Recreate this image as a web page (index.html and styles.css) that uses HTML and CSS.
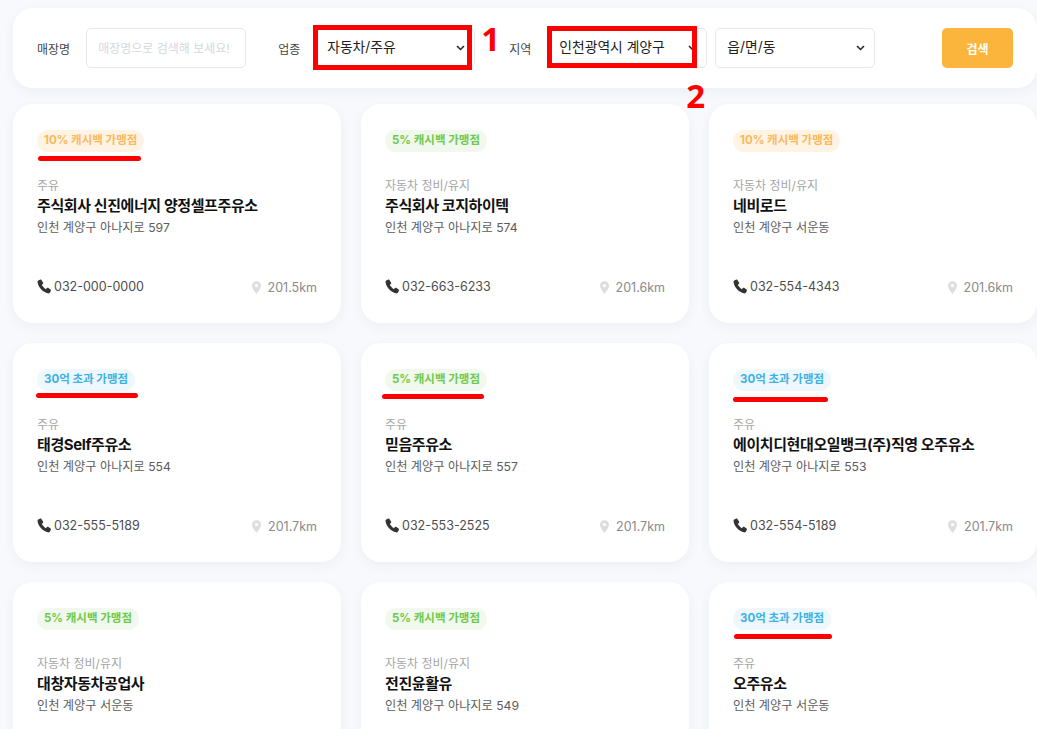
FILE: index.html
```html
<!DOCTYPE html>
<html lang="ko">
<head>
  <meta charset="UTF-8">
  <meta name="viewport" content="width=device-width, initial-scale=1.0">
  <title>가맹점 검색</title>
  <link rel="stylesheet" href="styles.css">
</head>
<body>
  <svg class="iconDefs" width="0" height="0">
    <symbol id="phone" viewBox="0 0 16 16">
      <path d="M3.600.6 1.400 1.500C.7 1.900.5 2.600.6 3.400c.4 2.800 1.800 5.400 3.800 7.600 2 2.100 4.500 3.700 7.300 4.300.8.2 1.600 0 2-.7l1.100-2.200c.2-.4.1-.9-.3-1.200l-2.700-1.800c-.4-.3-.9-.2-1.200.1L9.500 10.900C8.100 10.200 5.800 7.800 5.100 6.400l1.300-1.300c.3-.3.4-.8.2-1.200L4.700 1C4.400.6 4 .4 3.600.6z"/>
    </symbol>
    <symbol id="pin" viewBox="0 0 10 14">
      <path fill-rule="evenodd" d="M5 0C2.200 0 0 2.200 0 5c0 3.500 5 9 5 9s5-5.500 5-9c0-2.800-2.200-5-5-5zm0 6.800A1.900 1.900 0 1 1 5 3a1.900 1.900 0 0 1 0 3.800z"/>
    </symbol>
  </svg>

  <div class="searchBar">
    <label class="fieldLabel nameLabel">매장명</label>
    <input type="text" class="nameInput" placeholder="매장명으로 검색해 보세요!">
    <label class="fieldLabel typeLabel">업종</label>
    <div class="marked">
      <select class="typeSelect"><option>자동차/주유</option></select>
      <span class="redBox typeBox"></span>
      <span class="redNum numOne">1</span>
    </div>
    <label class="fieldLabel areaLabel">지역</label>
    <div class="marked">
      <select class="areaSelect"><option>인천광역시 계양구</option></select>
      <span class="redBox areaBox"></span>
      <span class="redNum numTwo">2</span>
    </div>
    <select class="townSelect"><option>읍/면/동</option></select>
    <button class="searchButton">검색</button>
  </div>

  <div class="cardGrid">
    <div class="card">
      <div class="badgeRow"><span class="badge orange">10% 캐시백 가맹점<i class="redLine lineA"></i></span></div>
      <div class="category">주유</div>
      <div class="shopName">주식회사 신진에너지 양정셀프주유소</div>
      <div class="address">인천 계양구 아나지로 597</div>
      <div class="cardFoot">
        <span class="tel"><svg class="phoneIcon"><use href="#phone"/></svg>032-000-0000</span>
        <span class="dist"><svg class="pinIcon"><use href="#pin"/></svg>201.5km</span>
      </div>
    </div>
    <div class="card">
      <div class="badgeRow"><span class="badge green">5% 캐시백 가맹점</span></div>
      <div class="category">자동차 정비/유지</div>
      <div class="shopName">주식회사 코지하이텍</div>
      <div class="address">인천 계양구 아나지로 574</div>
      <div class="cardFoot">
        <span class="tel"><svg class="phoneIcon"><use href="#phone"/></svg>032-663-6233</span>
        <span class="dist"><svg class="pinIcon"><use href="#pin"/></svg>201.6km</span>
      </div>
    </div>
    <div class="card">
      <div class="badgeRow"><span class="badge orange">10% 캐시백 가맹점</span></div>
      <div class="category">자동차 정비/유지</div>
      <div class="shopName">네비로드</div>
      <div class="address">인천 계양구 서운동</div>
      <div class="cardFoot">
        <span class="tel"><svg class="phoneIcon"><use href="#phone"/></svg>032-554-4343</span>
        <span class="dist"><svg class="pinIcon"><use href="#pin"/></svg>201.6km</span>
      </div>
    </div>
    <div class="card">
      <div class="badgeRow"><span class="badge blue">30억 초과 가맹점<i class="redLine lineB"></i></span></div>
      <div class="category">주유</div>
      <div class="shopName">태경Self주유소</div>
      <div class="address">인천 계양구 아나지로 554</div>
      <div class="cardFoot">
        <span class="tel"><svg class="phoneIcon"><use href="#phone"/></svg>032-555-5189</span>
        <span class="dist"><svg class="pinIcon"><use href="#pin"/></svg>201.7km</span>
      </div>
    </div>
    <div class="card">
      <div class="badgeRow"><span class="badge green">5% 캐시백 가맹점<i class="redLine lineC"></i></span></div>
      <div class="category">주유</div>
      <div class="shopName">믿음주유소</div>
      <div class="address">인천 계양구 아나지로 557</div>
      <div class="cardFoot">
        <span class="tel"><svg class="phoneIcon"><use href="#phone"/></svg>032-553-2525</span>
        <span class="dist"><svg class="pinIcon"><use href="#pin"/></svg>201.7km</span>
      </div>
    </div>
    <div class="card">
      <div class="badgeRow"><span class="badge blue">30억 초과 가맹점<i class="redLine lineD"></i></span></div>
      <div class="category">주유</div>
      <div class="shopName">에이치디현대오일뱅크(주)직영 오주유소</div>
      <div class="address">인천 계양구 아나지로 553</div>
      <div class="cardFoot">
        <span class="tel"><svg class="phoneIcon"><use href="#phone"/></svg>032-554-5189</span>
        <span class="dist"><svg class="pinIcon"><use href="#pin"/></svg>201.7km</span>
      </div>
    </div>
    <div class="card">
      <div class="badgeRow"><span class="badge green">5% 캐시백 가맹점</span></div>
      <div class="category">자동차 정비/유지</div>
      <div class="shopName">대창자동차공업사</div>
      <div class="address">인천 계양구 서운동</div>
    </div>
    <div class="card">
      <div class="badgeRow"><span class="badge green">5% 캐시백 가맹점</span></div>
      <div class="category">자동차 정비/유지</div>
      <div class="shopName">전진윤활유</div>
      <div class="address">인천 계양구 아나지로 549</div>
    </div>
    <div class="card">
      <div class="badgeRow"><span class="badge blue">30억 초과 가맹점<i class="redLine lineE"></i></span></div>
      <div class="category">주유</div>
      <div class="shopName">오주유소</div>
      <div class="address">인천 계양구 서운동</div>
    </div>
  </div>
</body>
</html>
```

FILE: styles.css
```css
html, body {
  margin: 0;
  height: 729px;
  overflow: hidden;
}

body {
  padding: 8px 0 0 13px;
  box-sizing: border-box;
  background: #f7f9fc;
  font-family: Inter, "Noto Sans CJK KR", sans-serif;
  color: #222;
}

.iconDefs {
  position: absolute;
}

/* search bar */
.searchBar {
  display: flex;
  align-items: center;
  width: 1024px;
  height: 80px;
  box-sizing: border-box;
  padding: 0 24px;
  background: #fff;
  border-radius: 20px;
  box-shadow: 0 4px 12px rgba(40, 60, 110, 0.05);
}

.fieldLabel {
  font-size: 12px;
  color: #444;
  white-space: nowrap;
}

.nameInput, .searchBar select {
  height: 40px;
  box-sizing: border-box;
  border: 1px solid #e5e7eb;
  border-radius: 5px;
  background-color: #fff;
  font-family: inherit;
  font-size: 13.8px;
  color: #222;
}

.searchBar select {
  appearance: none;
  padding: 0 11px 2px;
  background-image: url("data:image/svg+xml,%3Csvg xmlns='http://www.w3.org/2000/svg' width='9' height='6'%3E%3Cpath d='M1 1l3.500 3.500L8 1' fill='none' stroke='%23222' stroke-width='1.500'/%3E%3C/svg%3E");
  background-repeat: no-repeat;
  background-position: right 9px center;
}

.nameInput {
  width: 160px;
  margin-left: 16px;
  padding: 0 11px;
  font-size: 12px;
}

.nameInput::placeholder {
  color: #d5d8dc;
}

.typeLabel { margin-left: 32px; }
.areaLabel { margin-left: 34px; }

.marked {
  position: relative;
}

.marked select {
  display: block;
}

.typeSelect { width: 160px; margin-left: 15px; }
.areaSelect { width: 160px; margin-left: 16px; }

.townSelect {
  width: 160px;
  margin-left: 8px;
}

.searchButton {
  width: 71px;
  height: 40px;
  margin-left: 67px;
  border: 0;
  border-radius: 5px;
  background: #fbb53c;
  color: #fff;
  font-family: inherit;
  font-size: 12px;
  font-weight: 700;
}

/* red marks drawn over the screenshot */
.redBox {
  position: absolute;
  box-sizing: border-box;
  border: 5px solid #f00;
}

.typeBox { left: 13px; top: -3px; width: 159px; height: 45px; }
.areaBox { left: 16px; top: -2px; width: 150px; height: 42px; }

.redNum {
  position: absolute;
  color: #f00;
  font-family: "Open Sans", sans-serif;
  font-size: 33px;
  font-weight: 700;
  line-height: 30px;
}

.numOne { left: 181px; top: -4px; }
.numTwo { left: 155px; top: 53px; }

/* cards */
.cardGrid {
  display: grid;
  grid-template-columns: repeat(3, 328px);
  grid-auto-rows: 219px;
  gap: 20px;
  margin-top: 16px;
}

.card {
  position: relative;
  box-sizing: border-box;
  padding: 24px 24px 0;
  background: #fff;
  border-radius: 20px;
  box-shadow: 0 4px 12px rgba(40, 60, 110, 0.05);
}

.badgeRow {
  height: 21px;
}

.badge {
  position: relative;
  display: inline-block;
  height: 22px;
  padding: 0 7px;
  border-radius: 11px;
  font-size: 11.500px;
  font-weight: 700;
  line-height: 20px;
  white-space: nowrap;
}

.orange { background: #fff4e4; color: #fbb860; }
.green { background: #f1f9ee; color: #70c94a; }
.blue { background: #eef7fc; color: #3fb2e4; }

.redLine {
  position: absolute;
  height: 5px;
  background: #f00;
  border-radius: 3px;
}

.lineA { left: 1px; top: 26px; width: 103px; }
.lineB { left: -1px; top: 24px; width: 102px; }
.lineC { left: -3px; top: 25px; width: 102px; }
.lineD { left: 0; top: 28px; width: 95px; }
.lineE { left: 1px; top: 26px; width: 98px; }

.category {
  margin-top: 28px;
  font-size: 12px;
  line-height: 18px;
  color: #a6a6a6;
}

.shopName {
  font-size: 15px;
  font-weight: 700;
  line-height: 22px;
  letter-spacing: -0.4px;
  color: #111;
}

.address {
  margin-top: 1px;
  font-size: 12.200px;
  line-height: 20px;
  color: #5c5c5c;
}

.cardFoot {
  position: absolute;
  left: 24px;
  right: 24px;
  top: 172px;
  display: flex;
  justify-content: space-between;
  align-items: center;
  height: 20px;
}

.tel {
  display: flex;
  align-items: center;
  font-size: 12.500px;
  color: #4d4d4d;
}

.dist {
  display: flex;
  align-items: center;
  margin-top: 2px;
  font-size: 12.500px;
  color: #8a8a8a;
}

.phoneIcon {
  width: 15px;
  height: 15px;
  margin-right: 2px;
  fill: #333;
}

.pinIcon {
  width: 9px;
  height: 13px;
  margin-right: 7px;
  fill: #ddd;
}
```
